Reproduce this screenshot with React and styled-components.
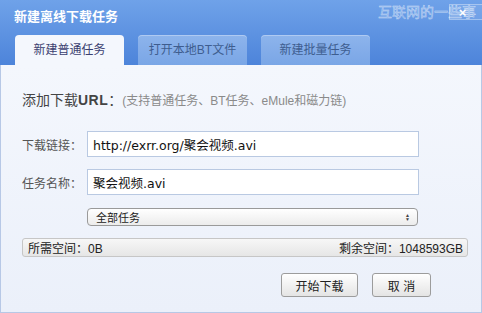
import React, { useState } from "react";
import styled, { createGlobalStyle } from "styled-components";

const Global = createGlobalStyle`
  html, body { margin: 0; padding: 0; background: #fff; }
  body {
    font-family: "Liberation Sans", "Noto Sans CJK SC", sans-serif;
    width: 482px;
    height: 313px;
    overflow: hidden;
  }
`;

const Dialog = styled.div`
  width: 482px;
  height: 313px;
  display: flex;
  flex-direction: column;
  box-sizing: border-box;
  position: relative;
`;

const Header = styled.div`
  height: 65px;
  background: linear-gradient(#6fa2e9, #4d84da);
  display: flex;
  flex-direction: column;
  justify-content: space-between;
  box-sizing: border-box;
`;

const Title = styled.div`
  color: #fff;
  font-size: 13px;
  font-weight: bold;
  padding: 9px 0 0 14px;
  height: 16px;
  line-height: 16px;
`;

const Watermark = styled.div`
  position: absolute;
  top: 4px;
  right: 6px;
  font-size: 14px;
  line-height: 16px;
  color: rgba(255, 255, 255, 0.12);
  -webkit-text-stroke: 0.45px rgba(255, 255, 255, 0.6);
`;

const CloseBox = styled.div`
  position: absolute;
  top: 4px;
  right: 0;
  width: 33px;
  height: 16px;
  box-sizing: border-box;
  border: 1px solid rgba(255, 255, 255, 0.35);
  border-right: none;
  background: rgba(255, 255, 255, 0.08);
  display: flex;
  align-items: center;
  justify-content: center;
  padding-right: 7px;
  color: #fff;
  font-size: 13px;
  font-weight: bold;
  line-height: 1;
`;

const Tabs = styled.div`
  display: flex;
  gap: 14px;
  padding-left: 15px;
`;

const Tab = styled.div`
  width: 109px;
  height: 30px;
  line-height: 30px;
  border-radius: 4px 4px 0 0;
  text-align: center;
  font-size: 12px;
  background: ${(p) => (p.$active ? "#f4f7fd" : "linear-gradient(#8db4ec, #7aa6e6)")};
  color: ${(p) => (p.$active ? "#3b3f70" : "#3e5d8f")};
  box-shadow: ${(p) => (p.$active ? "none" : "inset 0 1px 0 rgba(255,255,255,0.3)")};
  cursor: default;
`;

const Body = styled.div`
  flex: 1;
  background: linear-gradient(#f4f7fd, #ebf0fa);
  border-left: 1px solid #b7c8e6;
  border-right: 1px solid #b7c8e6;
  border-bottom: 1px solid #b7c8e6;
  padding: 25px 13px 0 21px;
  display: flex;
  flex-direction: column;
`;

const Heading = styled.div`
  font-size: 14px;
  color: #444;
  height: 20px;
  line-height: 20px;
  margin-bottom: 21px;
  b { font-weight: bold; letter-spacing: 0.5px; }
`;

const Hint = styled.span`
  font-size: 12px;
  color: #8a8a8a;
`;

const Row = styled.div`
  display: flex;
  align-items: center;
  height: 26px;
  margin-bottom: 12px;
`;

const Label = styled.label`
  width: 65px;
  font-size: 12px;
  color: #555;
`;

const Input = styled.input`
  width: 332px;
  height: 26px;
  box-sizing: border-box;
  border: 1px solid #b9c9e2;
  background: #fff;
  padding: 0 5px;
  font-family: "DejaVu Sans", "Noto Sans CJK SC", sans-serif;
  font-size: 12.5px;
  color: #111;
  outline: none;
`;

const SelectWrap = styled.div`
  margin: 1px 0 0 65px;
  width: 331px;
  height: 18px;
  box-sizing: border-box;
  border: 1px solid #9a9a9a;
  border-radius: 4px;
  background: linear-gradient(#ffffff, #ececec);
  display: flex;
  align-items: center;
  justify-content: space-between;
  padding: 0 7px 0 8px;
  font-size: 11px;
  color: #222;
`;

const Arrows = styled.span`
  display: flex;
  flex-direction: column;
  font-size: 5px;
  line-height: 4px;
  color: #444;
`;

const Status = styled.div`
  margin-top: 12px;
  height: 19px;
  box-sizing: border-box;
  border: 1px solid #c6c6c6;
  border-radius: 3px;
  background: linear-gradient(#f7f7f7, #e6e6e6);
  display: flex;
  align-items: center;
  justify-content: space-between;
  padding: 0 4px 0 5px;
  font-size: 12px;
  color: #222;
`;

const Actions = styled.div`
  display: flex;
  justify-content: flex-end;
  gap: 14px;
  margin-top: 16px;
  padding-right: 37px;
`;

const Button = styled.button`
  width: ${(p) => p.$w}px;
  height: 24px;
  border: 1px solid #9c9c9c;
  border-radius: 3px;
  background: linear-gradient(#ffffff, #e4e4e4);
  font-family: "Liberation Sans", "Noto Sans CJK SC", sans-serif;
  font-size: 12px;
  color: #222;
  padding: 0;
`;

export default function App() {
  const [url, setUrl] = useState("http://exrr.org/聚会视频.avi");
  const [name, setName] = useState("聚会视频.avi");
  const tabs = ["新建普通任务", "打开本地BT文件", "新建批量任务"];
  return (
    <Dialog>
      <Global />
      <Header>
        <Title>新建离线下载任务</Title>
        <Tabs>
          {tabs.map((t, i) => (
            <Tab key={t} $active={i === 0}>{t}</Tab>
          ))}
        </Tabs>
      </Header>
      <Watermark>互联网的一些事</Watermark>
      <CloseBox>×</CloseBox>
      <Body>
        <Heading>
          添加下载<b>URL</b>：<Hint>(支持普通任务、BT任务、eMule和磁力链)</Hint>
        </Heading>
        <Row>
          <Label>下载链接：</Label>
          <Input value={url} onChange={(e) => setUrl(e.target.value)} />
        </Row>
        <Row>
          <Label>任务名称：</Label>
          <Input value={name} onChange={(e) => setName(e.target.value)} />
        </Row>
        <SelectWrap>
          <span>全部任务</span>
          <Arrows><span>▲</span><span>▼</span></Arrows>
        </SelectWrap>
        <Status>
          <span>所需空间：0B</span>
          <span>剩余空间：1048593GB</span>
        </Status>
        <Actions>
          <Button $w={77}>开始下载</Button>
          <Button $w={59}>取 消</Button>
        </Actions>
      </Body>
    </Dialog>
  );
}
